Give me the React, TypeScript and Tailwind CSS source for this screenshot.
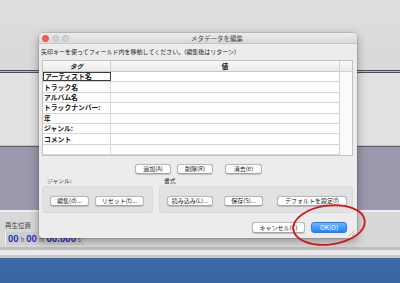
import React from 'react';

const font = { fontFamily: '"Noto Sans CJK JP", "Noto Sans", sans-serif' };

const tags = ['アーティスト名', 'トラック名', 'アルバム名', 'トラックナンバー:', '年', 'ジャンル:', 'コメント', ''];

function Btn({ label, w, className = '' }: { label: string; w: string; className?: string }) {
  return (
    <div
      className={`${w} h-full flex items-center justify-center rounded-[3px] bg-white border border-[#b9b9b9] border-b-[#a3a3a3] shadow-[0_0.5px_1px_rgba(0,0,0,0.18)] text-[6px] leading-none text-[#222] whitespace-nowrap ${className}`}
    >
      {label}
    </div>
  );
}

function Dialog() {
  return (
    <div className="absolute left-[39px] top-[33px] w-[318px] h-[205px] bg-[#ececec] rounded-[4px] shadow-[0_3px_10px_rgba(0,0,0,0.35),0_0_0_0.5px_rgba(0,0,0,0.2)] flex flex-col overflow-hidden leading-none">
      {/* Title bar */}
      <div className="relative h-[11px] shrink-0 flex items-center pl-[3px] gap-[3px] bg-gradient-to-b from-[#ebebeb] to-[#d9d9d9] border-b border-[#c4c4c4]">
        <div className="w-[7px] h-[7px] rounded-full bg-[#fc5f57] border-[0.5px] border-[#e0443e]" />
        <div className="w-[7px] h-[7px] rounded-full bg-[#d3d3d3] border-[0.5px] border-[#c0c0c0]" />
        <div className="w-[7px] h-[7px] rounded-full bg-[#d3d3d3] border-[0.5px] border-[#c0c0c0]" />
        <div className="absolute inset-0 flex items-center justify-center pl-[38px] text-[6.5px] text-[#4a4a4a]">
          メタデータを編集
        </div>
      </div>

      {/* Instruction */}
      <div className="h-[16px] shrink-0 flex items-center pl-[2px] text-[6px] text-[#1a1a1a] whitespace-nowrap">
        矢印キーを使ってフィールド内を移動してください。(編集後はリターン)
      </div>

      {/* Table */}
      <div className="ml-[3px] mr-[4px] flex border border-[#c2c2c2] bg-white">
        <div className="w-[296px] flex flex-col">
          <div className="h-[11px] flex bg-gradient-to-b from-[#fafafa] to-[#ebebeb] border-b border-[#c8c8c8] text-[6.5px] font-bold text-[#111]">
            <div className="w-[68px] flex items-center justify-center border-r border-[#cfcfcf] italic">タグ</div>
            <div className="flex-1 flex items-center justify-center">値</div>
          </div>
          {tags.map((t, i) => (
            <div key={i} className="h-[10.4px] flex border-b border-[#d6d6d6]">
              <div
                className={`w-[68px] flex items-center pl-[1px] text-[6.8px] font-bold text-[#111] whitespace-nowrap border-r ${
                  i === 0 ? 'border border-[#3a3a3a]' : 'border-[#d6d6d6]'
                }`}
              >
                {t}
              </div>
              <div className="flex-1" />
            </div>
          ))}
        </div>
        <div className="flex-1 flex flex-col border-l border-[#d2d2d2] bg-[#fbfbfb]">
          <div className="h-[11px] bg-gradient-to-b from-[#fafafa] to-[#ebebeb] border-b border-[#d0d0d0]" />
        </div>
      </div>

      {/* Table buttons */}
      <div className="mt-[8px] h-[10px] flex pl-[96px]">
        <Btn label="追加(A)" w="w-[36px]" />
        <Btn label="削除(R)" w="w-[36px]" className="ml-[6px]" />
        <Btn label="消去(e)" w="w-[37px]" className="ml-[12px]" />
      </div>

      {/* Groups */}
      <div className="mt-[2px] flex pl-[3px] gap-[6px]">
        <div className="w-[111px] flex flex-col">
          <div className="h-[10px] flex items-center pl-[5px] text-[5.8px] text-[#333]">ジャンル:</div>
          <div className="h-[27px] rounded-[3px] bg-[#e2e2e2] border border-[#dadada] flex pl-[7px] pt-[9px] pb-[6px]">
            <Btn label="編集(d)..." w="w-[39px]" />
            <Btn label="リセット(t)..." w="w-[49px]" className="ml-[6px]" />
          </div>
        </div>
        <div className="w-[194px] flex flex-col">
          <div className="h-[10px] flex items-center pl-[5px] text-[5.8px] text-[#333]">書式</div>
          <div className="h-[27px] rounded-[3px] bg-[#e2e2e2] border border-[#dadada] flex pl-[7px] pt-[9px] pb-[6px]">
            <Btn label="読み込み(L)..." w="w-[46px]" />
            <Btn label="保存(S)..." w="w-[39px]" className="ml-[11px]" />
            <Btn label="デフォルトを設定(f)" w="w-[70px]" className="ml-[14px]" />
          </div>
        </div>
      </div>

      {/* Bottom buttons */}
      <div className="mt-[9px] h-[11px] flex justify-end pr-[10px]">
        <Btn label="キャンセル(C)" w="w-[53px]" />
        <div className="ml-[6px] w-[36px] h-full flex items-center justify-center rounded-[3px] bg-gradient-to-b from-[#6db4fb] to-[#1d84fb] border border-[#2a7ae8] text-[6.5px] leading-none text-white">
          OK(O)
        </div>
      </div>

      {/* Resize grip */}
      <svg className="absolute right-[2px] bottom-[2px]" width="7" height="7" viewBox="0 0 7 7">
        <line x1="1" y1="7" x2="7" y2="1" stroke="#9a9a9a" strokeWidth="0.6" />
        <line x1="4" y1="7" x2="7" y2="4" stroke="#9a9a9a" strokeWidth="0.6" />
      </svg>
    </div>
  );
}

export default function App() {
  return (
    <div className="relative w-[400px] h-[283px] overflow-hidden flex flex-col" style={font}>
      <div className="h-[70px] bg-gradient-to-b from-[#dedede] to-[#d9d9d9]" />
      <div className="h-[3px] bg-[#b6b6c6] border-y border-[#4c4c5e]" />
      <div className="h-[73px] bg-[#e1e1e1] border-b border-[#c4c4c4]" />
      <div className="h-[1px] bg-[#5c5c6e]" />
      <div className="h-[63px] bg-[#9a98ac]" />
      <div className="h-[2px] bg-[#ededed]" />
      <div className="h-[35px] bg-[#d8d8d8] pl-[5px] pt-[9px] leading-none">
        <div className="h-[8px] flex items-center text-[6.5px] text-[#444]">再生位置</div>
        <div className="mt-[3px] w-[79px] h-[13px] flex items-end pb-[2px] pl-[2px] gap-[2px] bg-[#cdcdcd] border-l border-[#f2f2f2] text-[#1e2fbf] font-bold whitespace-nowrap">
          <span className="text-[9px]">00</span>
          <span className="text-[6px] text-[#555] font-normal">h</span>
          <span className="text-[9px]">00</span>
          <span className="text-[6px] text-[#555] font-normal">m</span>
          <span className="text-[9px]">00.000</span>
          <span className="text-[6px] text-[#555] font-normal">s</span>
        </div>
      </div>
      <div className="h-[3px] bg-[#bdbdbd]" />
      <div className="h-[5px] bg-[#eaeaea]" />
      <div className="h-[3px] bg-[#c9c9c9]" />
      <div className="flex-1 bg-gradient-to-b from-[#3e6aa9] to-[#3a64a2]" />

      <Dialog />

      {/* Red annotation circle */}
      <svg className="absolute left-0 top-0 pointer-events-none" width="400" height="283" viewBox="0 0 400 283">
        <ellipse cx="329" cy="225" rx="36" ry="19.5" transform="rotate(-7 329 225)" fill="none" stroke="#d6141a" strokeWidth="1.8" />
      </svg>
    </div>
  );
}
